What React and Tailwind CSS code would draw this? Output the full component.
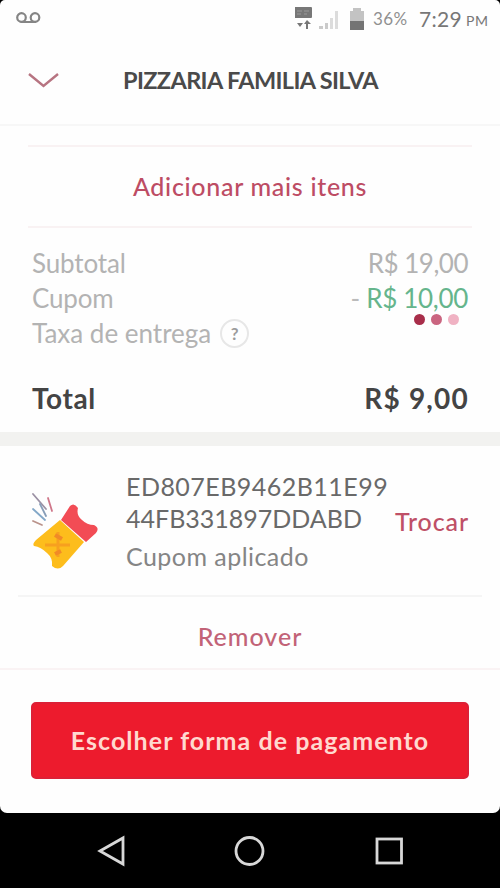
function StatusBar() {
  return (
    <div className="flex h-9 items-center pl-[15px] pr-[11px] pt-[2px] text-[#777]">
      <svg width="27" height="14" viewBox="0 0 27 14" fill="none" stroke="#858585" strokeWidth="2.2">
        <circle cx="6.5" cy="5.5" r="4.3" />
        <circle cx="20" cy="5.5" r="4.3" />
        <path d="M5.500 10H21" />
      </svg>
      <svg className="ml-auto" width="72" height="26" viewBox="0 0 72 26">
        <rect x="-1" y="1" width="18" height="11" rx="1" fill="#777" />
        <path d="M2 5H7M9 5H14M2 8H6M9 8H12" stroke="#999" strokeWidth="1.2" />
        <path d="M2 17H8L5 21ZM9 18H11V23H13V18H16L12 14Z" fill="#777" />
        <path d="M24 20H28V23H24ZM30 17H33V23H30Z" fill="#cacaca" />
        <path d="M35 12H38V23H35ZM40 5H43V23H40Z" fill="#dcdcdc" />
        <path d="M58 2H66V5H69V16H55V5H58Z" fill="#c3c3c3" />
        <path d="M55 15H69V24H55Z" fill="#747474" />
      </svg>
      <span className="ml-[6px] w-[36px] whitespace-nowrap text-[17px] tracking-[0.4px] text-[#909090]">36%</span>
      <span className="ml-[10px] w-[43px] whitespace-nowrap text-[21px] tracking-[0.3px]">7:29</span>
      <span className="ml-[4px] w-[23px] whitespace-nowrap pt-[2px] text-[14px] tracking-[0.5px]">PM</span>
    </div>
  );
}

function Header() {
  return (
    <header className="flex h-[90px] items-center border-b-2 border-[#f7f7f7] pl-7">
      <svg width="32" height="18" viewBox="0 0 32 18" fill="none">
        <path d="M1 3L15.500 15L30 3" stroke="#b77481" strokeWidth="2.4" />
      </svg>
      <h1 className="ml-[63px] whitespace-nowrap pt-px text-[23.500px] font-bold tracking-[-0.63px] text-[#4a4a4a]">PIZZARIA FAMILIA SILVA</h1>
    </header>
  );
}

function Summary() {
  return (
    <section className="flex h-[204px] flex-col px-8 pt-[18px] text-[26px] text-[#b3b3b3]">
      <div className="flex h-[35px] items-center justify-between">
        <span className="tracking-[-0.15px]">Subtotal</span>
        <span className="tracking-[-0.5px]">R$ 19,00</span>
      </div>
      <div className="relative flex h-[35px] items-center justify-between">
        <span className="tracking-[-0.2px]">Cupom</span>
        <span className="tracking-[-0.3px] text-[#65b58c]"><span className="text-[#bbb]">- </span>R$ 10,00</span>
        <div className="absolute right-[9px] top-[33px] flex gap-[6px]">
          <i className="size-[11px] rounded-full bg-[#a82e4a]" />
          <i className="size-[11px] rounded-full bg-[#ca6580]" />
          <i className="size-[11px] rounded-full bg-[#f0b2c3]" />
        </div>
      </div>
      <div className="flex h-[35px] items-center">
        <span>Taxa de entrega</span>
        <span className="ml-[9px] flex size-[29px] items-center justify-center rounded-full border-2 border-[#e7e7e7] text-[17px] font-bold text-[#9b9b9b]">?</span>
      </div>
      <div className="mt-[27px] flex h-[40px] items-center justify-between text-[28px] font-bold text-[#444]">
        <span className="tracking-[0.6px]">Total</span>
        <span className="-mr-px tracking-[1.2px]">R$ 9,00</span>
      </div>
    </section>
  );
}

function CouponIcon() {
  return (
    <svg width="72" height="82" viewBox="0 0 72 82">
      <g fill="none" strokeWidth="1.8" strokeLinecap="round">
        <path d="M2 5L15 20" stroke="#9b91a4" />
        <path d="M9 15L15 27" stroke="#879eb8" />
        <path d="M17 9L21 22" stroke="#cf7689" />
        <path d="M2 20L14 31" stroke="#83a8c8" />
        <path d="M2 32L11 36" stroke="#ba938b" />
      </g>
      <path d="M29 31L53 53L32 77Q27 82 21 77Q22 69 16 64Q10 58 3 57Q1 55 5 51Z" fill="#fdbd1c" />
      <path d="M30 31L39 17Q43 13 47 19Q45 26 51 31Q56 36 63 36Q69 39 65 44L55 53Z" fill="#f24c55" />
      <path d="M14 56H39M27 43V68" stroke="#f7a01f" strokeWidth="3" />
      <path d="M24 46L31 50M24 65L30 62" stroke="#f18a27" strokeWidth="4" />
    </svg>
  );
}

function Coupon() {
  return (
    <section className="px-[18px]">
      <div className="flex h-[151px] border-b-2 border-[#f5f5f5] pl-[13px] pr-[14px]">
        <div className="pt-[43px]"><CouponIcon /></div>
        <div className="ml-[23px] w-[264px] whitespace-nowrap pt-[24px] text-[#696969]">
          <p className="text-[25px] leading-8 tracking-[0.47px]">ED807EB9462B11E99</p>
          <p className="text-[25px] leading-8">44FB331897DDABD</p>
          <p className="mt-[4px] text-[25px] leading-9 tracking-[0.45px] text-[#858585]">Cupom aplicado</p>
        </div>
        <button className="-mr-px ml-auto mt-[59px] h-8 text-[25px] font-medium leading-8 tracking-[0.9px] text-[#bf5067]">Trocar</button>
      </div>
    </section>
  );
}

function NavigationBar() {
  return (
    <nav className="flex h-[75px] items-center bg-black pl-[97px]">
      <svg width="308" height="32" viewBox="0 0 308 32" fill="none" stroke="#d8d8d8" strokeWidth="2.8">
        <path d="M3 16L26 3V29Z" />
        <circle cx="152.500" cy="16" r="13.500" />
        <rect x="280" y="4" width="24.500" height="24" />
      </svg>
    </nav>
  );
}

export default function App() {
  return (
    <div className="h-[888px] w-[500px] overflow-hidden bg-black font-['Lato',sans-serif]">
      <main className="h-[813px] overflow-hidden rounded-b-[7px] rounded-t-[5px] bg-[#fefefe]">
        <StatusBar />
        <Header />
        <div className="px-7 pt-[19px]">
          <div className="flex h-[83px] items-center justify-center border-y-2 border-[#f9f2f3]">
            <button className="whitespace-nowrap text-[25px] font-medium tracking-[0.7px] text-[#bd4c64]">Adicionar mais itens</button>
          </div>
        </div>
        <Summary />
        <div className="h-[14px] bg-[#f2f2f0]" />
        <Coupon />
        <div className="flex h-[73px] items-center justify-center border-b-2 border-[#faf3f4] pt-2">
          <button className="text-[25px] font-medium tracking-[1px] text-[#c26377]">Remover</button>
        </div>
        <div className="px-[31px] pt-[32px]">
          <button className="h-[77px] w-full whitespace-nowrap rounded-[5px] border-2 border-[#dc2036] bg-[#ed1b2d] text-[25px] font-bold tracking-[1.05px] text-[#ffd9cf]">Escolher forma de pagamento</button>
        </div>
      </main>
      <NavigationBar />
    </div>
  );
}
